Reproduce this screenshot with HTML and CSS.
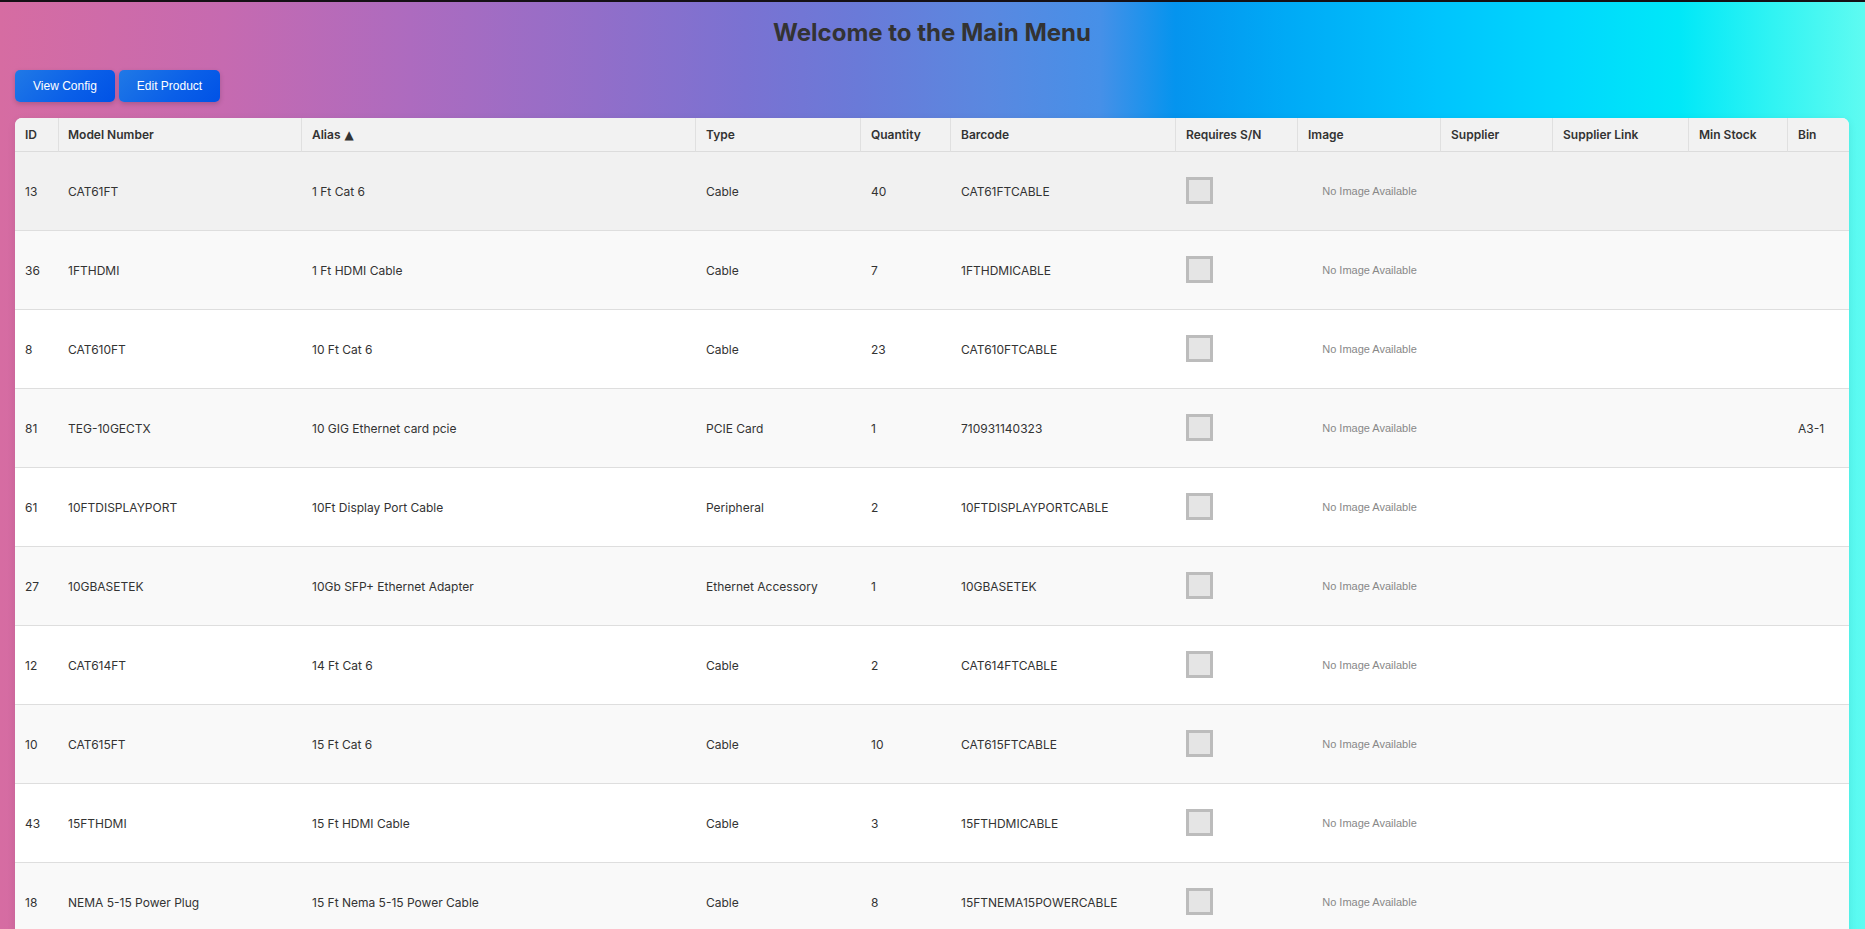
FILE: index.html
```html
<!DOCTYPE html>
<html lang="en">
<head>
<meta charset="utf-8">
<title>Main Menu</title>
<link rel="stylesheet" href="styles.css">
</head>
<body>
<div class="page">
  <h1 class="title">Welcome to the Main Menu</h1>
  <div class="actions">
    <button class="btn">View Config</button>
    <button class="btn">Edit Product</button>
  </div>
  <table class="grid">
    <colgroup>
      <col class="c-id"><col class="c-model"><col class="c-alias"><col class="c-type"><col class="c-qty"><col class="c-barcode"><col class="c-sn"><col class="c-img"><col class="c-sup"><col class="c-link"><col class="c-min"><col class="c-bin">
    </colgroup>
    <thead>
      <tr>
        <th>ID</th><th>Model Number</th><th>Alias <span class="sort">▲</span></th><th>Type</th><th>Quantity</th><th>Barcode</th><th>Requires S/N</th><th>Image</th><th>Supplier</th><th>Supplier Link</th><th>Min Stock</th><th>Bin</th>
      </tr>
    </thead>
    <tbody>
      <tr class="hovered"><td>13</td><td>CAT61FT</td><td>1 Ft Cat 6</td><td>Cable</td><td>40</td><td>CAT61FTCABLE</td><td><span class="check"></span></td><td class="img">No Image Available</td><td></td><td></td><td></td><td></td></tr>
      <tr><td>36</td><td>1FTHDMI</td><td>1 Ft HDMI Cable</td><td>Cable</td><td>7</td><td>1FTHDMICABLE</td><td><span class="check"></span></td><td class="img">No Image Available</td><td></td><td></td><td></td><td></td></tr>
      <tr><td>8</td><td>CAT610FT</td><td>10 Ft Cat 6</td><td>Cable</td><td>23</td><td>CAT610FTCABLE</td><td><span class="check"></span></td><td class="img">No Image Available</td><td></td><td></td><td></td><td></td></tr>
      <tr><td>81</td><td>TEG-10GECTX</td><td>10 GIG Ethernet card pcie</td><td>PCIE Card</td><td>1</td><td>710931140323</td><td><span class="check"></span></td><td class="img">No Image Available</td><td></td><td></td><td></td><td>A3-1</td></tr>
      <tr><td>61</td><td>10FTDISPLAYPORT</td><td>10Ft Display Port Cable</td><td>Peripheral</td><td>2</td><td>10FTDISPLAYPORTCABLE</td><td><span class="check"></span></td><td class="img">No Image Available</td><td></td><td></td><td></td><td></td></tr>
      <tr><td>27</td><td>10GBASETEK</td><td>10Gb SFP+ Ethernet Adapter</td><td>Ethernet Accessory</td><td>1</td><td>10GBASETEK</td><td><span class="check"></span></td><td class="img">No Image Available</td><td></td><td></td><td></td><td></td></tr>
      <tr><td>12</td><td>CAT614FT</td><td>14 Ft Cat 6</td><td>Cable</td><td>2</td><td>CAT614FTCABLE</td><td><span class="check"></span></td><td class="img">No Image Available</td><td></td><td></td><td></td><td></td></tr>
      <tr><td>10</td><td>CAT615FT</td><td>15 Ft Cat 6</td><td>Cable</td><td>10</td><td>CAT615FTCABLE</td><td><span class="check"></span></td><td class="img">No Image Available</td><td></td><td></td><td></td><td></td></tr>
      <tr><td>43</td><td>15FTHDMI</td><td>15 Ft HDMI Cable</td><td>Cable</td><td>3</td><td>15FTHDMICABLE</td><td><span class="check"></span></td><td class="img">No Image Available</td><td></td><td></td><td></td><td></td></tr>
      <tr><td>18</td><td>NEMA 5-15 Power Plug</td><td>15 Ft Nema 5-15 Power Cable</td><td>Cable</td><td>8</td><td>15FTNEMA15POWERCABLE</td><td><span class="check"></span></td><td class="img">No Image Available</td><td></td><td></td><td></td><td></td></tr>
    </tbody>
  </table>
</div>
</body>
</html>
```
FILE: styles.css
```css
html, body {
  margin: 0;
  padding: 0;
}
body {
  border-top: 2px solid #151015;
  background: linear-gradient(to right,
    #d66ca2 0%,
    #c66ab0 12%,
    #ad6bbf 22%,
    #926ec9 32%,
    #7a72d2 40%,
    #6a7ad8 46%,
    #5a88e0 53%,
    #4690e8 59%,
    #0594ee 63%,
    #00aaf6 69%,
    #00c4fd 77%,
    #00d8fd 84%,
    #00e8f8 90%,
    #30f3f3 95%,
    #5ffbf1 100%);
  font-family: Inter, "Liberation Sans", sans-serif;
  color: #333;
  min-height: 100vh;
}
.page {
  padding: 16px 16px 0 15px;
}
.title {
  margin: 0;
  text-align: center;
  font-size: 24px;
  line-height: 29px;
  font-weight: 700;
  color: #333;
}
.actions {
  display: flex;
  gap: 4px;
  margin-top: 23px;
}
.btn {
  height: 32px;
  padding: 0 18px;
  border: none;
  border-radius: 5px;
  background: linear-gradient(135deg, #2079e6 0%, #0a5fe8 60%, #0052e6 100%);
  color: #fff;
  font-family: "Liberation Sans", Arial, sans-serif;
  font-size: 12px;
  box-shadow: 0 2px 5px rgba(0, 0, 0, 0.18);
  cursor: pointer;
}
.grid {
  margin-top: 16px;
  width: 1834px;
  table-layout: fixed;
  border-collapse: separate;
  border-spacing: 0;
  background: #fff;
  border-radius: 7px 7px 0 0;
  overflow: hidden;
  box-shadow: 0 2px 8px rgba(0, 0, 0, 0.08);
}
.c-id { width: 44px; }
.c-model { width: 243px; }
.c-alias { width: 394px; }
.c-type { width: 165px; }
.c-qty { width: 90px; }
.c-barcode { width: 225px; }
.c-sn { width: 122px; }
.c-img { width: 143px; }
.c-sup { width: 112px; }
.c-link { width: 136px; }
.c-min { width: 99px; }
.c-bin { width: 61px; }

.grid th {
  height: 34px;
  padding: 0 10px;
  box-sizing: border-box;
  background: #f2f2f2;
  border-bottom: 1px solid #dcdcdc;
  border-right: 1px solid #e0e0e0;
  text-align: left;
  font-size: 12px;
  font-weight: 600;
  color: #333;
  white-space: nowrap;
}
.grid th:last-child {
  border-right: none;
}
.sort {
  font-family: "DejaVu Sans", sans-serif;
  font-size: 12px;
  margin-left: 1px;
}
.grid td {
  height: 79px;
  padding: 0 10px;
  box-sizing: border-box;
  border-bottom: 1px solid #dedede;
  font-size: 12px;
  color: #333;
  vertical-align: middle;
  white-space: nowrap;
}
.grid td:nth-child(2),
.grid th:nth-child(2) {
  padding-left: 9px;
}
.grid tbody tr:nth-child(odd) td {
  background: #fff;
}
.grid tbody tr:nth-child(even) td {
  background: #f9f9f9;
}
.grid tbody tr.hovered td {
  background: #f1f1f1;
}
.grid td.img {
  text-align: center;
  font-family: "Liberation Sans", Arial, sans-serif;
  font-size: 11px;
  color: #888;
}
.check {
  display: block;
  width: 27px;
  height: 27px;
  box-sizing: border-box;
  border: 3px solid #bcbcbc;
  background: #e5e5e5;
  margin-top: -2px;
}
```
